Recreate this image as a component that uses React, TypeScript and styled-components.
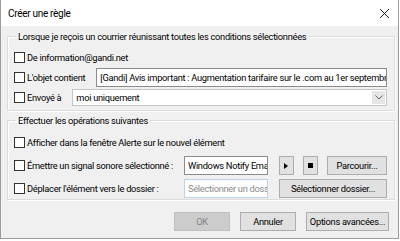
import { createGlobalStyle } from 'styled-components'
import styled from 'styled-components'

const GlobalStyle = createGlobalStyle`
  html, body {
    margin: 0;
    padding: 0;
    background: #ffffff;
  }
  body {
    font-family: Roboto, "Noto Sans", sans-serif;
    font-size: 9.3px;
    letter-spacing: -0.3px;
    color: #000;
  }
`

const Dialog = styled.div`
  width: 397px;
  height: 238px;
  border: 1px solid #9c9c9c;
  border-top: none;
  background: #f0f0f0;
  display: flex;
  flex-direction: column;
`

const TitleBar = styled.div`
  height: 26px;
  background: #fff;
  display: flex;
  align-items: center;
  justify-content: space-between;
  padding: 0 8px 0 7px;
  font-size: 10px;
`

const Body = styled.div`
  flex: 1;
  display: flex;
  flex-direction: column;
  padding: 5px 3px 0 6px;
`

const Group = styled.fieldset<{ $top?: number; $bottom?: number }>`
  margin: ${p => p.$top ?? 0}px 0 0 0;
  min-width: 0;
  border: 1px solid #dcdcdc;
  box-shadow: inset 1px 1px 0 #fff, 1px 1px 0 #fff;
  padding: 2px 7px ${p => p.$bottom ?? 3}px 6px;
  display: flex;
  flex-direction: column;

  legend {
    padding: 0 2px;
    margin-left: 2px;
  }
`

const Row = styled.div<{ $h?: number; $mt?: number }>`
  height: ${p => p.$h ?? 20}px;
  margin-top: ${p => p.$mt ?? 0}px;
  display: flex;
  align-items: center;
  gap: 11px;
  min-width: 0;
`

const Check = styled.label`
  display: flex;
  align-items: center;
  gap: 2px;
  white-space: nowrap;
`

const Box = styled.span`
  width: 11px;
  height: 11px;
  box-sizing: border-box;
  border: 1px solid #333;
  background: #fff;
  flex: none;
`

const TextField = styled.div<{ $disabled?: boolean }>`
  height: 19px;
  box-sizing: border-box;
  border: 1px solid ${p => (p.$disabled ? '#b9d1ea' : '#8c8c8c')};
  background: #fff;
  color: ${p => (p.$disabled ? '#8a8a8a' : '#000')};
  display: flex;
  align-items: center;
  padding: 0 3px;
  white-space: nowrap;
  overflow: hidden;
  flex: 1;
  min-width: 0;
`

const Combo = styled.div`
  flex: 1;
  height: 17px;
  box-sizing: border-box;
  border: 1px solid #c4c4c4;
  background: #fff;
  display: flex;
  align-items: center;
  padding-left: 3px;
  padding-right: 1px;

  span {
    flex: 1;
  }
`

const DropButton = styled.div`
  width: 13px;
  height: 13px;
  background: #e6e6e6;
  display: flex;
  align-items: center;
  justify-content: center;
`

const ActionGrid = styled.div`
  display: grid;
  grid-template-columns: auto 84px minmax(0, 1fr);
  column-gap: 11px;
  row-gap: 4px;
  margin-top: 4px;
  align-items: center;
`

const Tools = styled.div`
  display: flex;
  align-items: center;
  gap: 9px;
`

const Button = styled.div<{ $w?: number; $disabled?: boolean }>`
  width: ${p => (p.$w ? `${p.$w}px` : 'auto')};
  height: 19px;
  box-sizing: border-box;
  border: 1px solid ${p => (p.$disabled ? '#bfbfbf' : '#adadad')};
  background: ${p => (p.$disabled ? '#cccccc' : '#e1e1e1')};
  color: ${p => (p.$disabled ? '#838383' : '#000')};
  display: flex;
  align-items: center;
  justify-content: center;
  white-space: nowrap;
  overflow: hidden;
  flex: ${p => (p.$w ? 'none' : '1')};
`

const Footer = styled.div`
  display: flex;
  justify-content: flex-end;
  gap: 10px;
  margin-top: 12px;
  padding-right: 6px;
`

function CheckLabel({ text }: { text: string }) {
  return (
    <Check>
      <Box />
      {text}
    </Check>
  )
}

export default function App() {
  return (
    <>
      <GlobalStyle />
      <Dialog>
        <TitleBar>
          <span>Créer une règle</span>
          <svg width="11" height="11" viewBox="0 0 11 11">
            <path d="M1 1 L10 10 M10 1 L1 10" stroke="#222" strokeWidth="1" />
          </svg>
        </TitleBar>
        <Body>
          <Group>
            <legend>Lorsque je reçois un courrier réunissant toutes les conditions sélectionnées</legend>
            <Row $mt={3}>
              <CheckLabel text="De information@gandi.net" />
            </Row>
            <Row>
              <CheckLabel text="L'objet contient" />
              <TextField>[Gandi] Avis important : Augmentation tarifaire sur le .com au 1er septembre</TextField>
            </Row>
            <Row>
              <CheckLabel text="Envoyé à" />
              <Combo>
                <span>moi uniquement</span>
                <DropButton>
                  <svg width="8" height="5" viewBox="0 0 8 5">
                    <path d="M0.5 0.5 L4 4 L7.5 0.5" fill="none" stroke="#666" strokeWidth="1" />
                  </svg>
                </DropButton>
              </Combo>
            </Row>
          </Group>
          <Group $top={4} $bottom={1}>
            <legend>Effectuer les opérations suivantes</legend>
            <Row $mt={4}>
              <CheckLabel text="Afficher dans la fenêtre Alerte sur le nouvel élément" />
            </Row>
            <ActionGrid>
              <CheckLabel text="Émettre un signal sonore sélectionné :" />
              <TextField>Windows Notify Email</TextField>
              <Tools>
                <Button $w={15}>
                  <svg width="4" height="6" viewBox="0 0 4 6">
                    <path d="M0 0 L4 3 L0 6 Z" fill="#000" />
                  </svg>
                </Button>
                <Button $w={15}>
                  <svg width="5" height="5" viewBox="0 0 5 5">
                    <rect width="5" height="5" fill="#000" />
                  </svg>
                </Button>
                <Button>Parcourir...</Button>
              </Tools>
              <CheckLabel text="Déplacer l'élément vers le dossier :" />
              <TextField $disabled>Sélectionner un dossier</TextField>
              <Button>Sélectionner dossier...</Button>
            </ActionGrid>
          </Group>
          <Footer>
            <Button $w={56} $disabled>OK</Button>
            <Button $w={56}>Annuler</Button>
            <Button $w={83}>Options avancées...</Button>
          </Footer>
        </Body>
      </Dialog>
    </>
  )
}
